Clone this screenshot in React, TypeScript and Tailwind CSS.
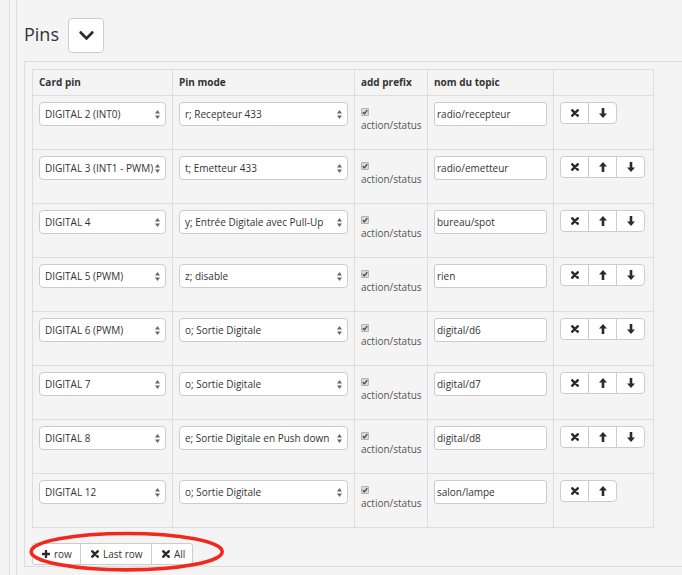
import React from "react";
import { FaChevronDown } from "react-icons/fa";

type Row = { pin: string; mode: string; topic: string; up: boolean; down: boolean };

const rows: Row[] = [
  { pin: "DIGITAL 2 (INT0)", mode: "r; Recepteur 433", topic: "radio/recepteur", up: false, down: true },
  { pin: "DIGITAL 3 (INT1 - PWM)", mode: "t; Emetteur 433", topic: "radio/emetteur", up: true, down: true },
  { pin: "DIGITAL 4", mode: "y; Entrée Digitale avec Pull-Up", topic: "bureau/spot", up: true, down: true },
  { pin: "DIGITAL 5 (PWM)", mode: "z; disable", topic: "rien", up: true, down: true },
  { pin: "DIGITAL 6 (PWM)", mode: "o; Sortie Digitale", topic: "digital/d6", up: true, down: true },
  { pin: "DIGITAL 7", mode: "o; Sortie Digitale", topic: "digital/d7", up: true, down: true },
  { pin: "DIGITAL 8", mode: "e; Sortie Digitale en Push down", topic: "digital/d8", up: true, down: true },
  { pin: "DIGITAL 12", mode: "o; Sortie Digitale", topic: "salon/lampe", up: true, down: false },
];

function SelectBox({ value }: { value: string }) {
  return (
    <div className="relative flex h-[24px] w-full items-center overflow-hidden whitespace-nowrap rounded-[4px] border border-[#ccc] bg-white pl-[5px] text-[10px] text-[#333]">
      {value}
      <svg className="absolute right-[5px] top-[7px]" width="5" height="9" viewBox="0 0 5 9">
        <path d="M0 3.5 L2.5 0 L5 3.5 Z" fill="#666" />
        <path d="M0 5.5 L5 5.5 L2.5 9 Z" fill="#666" />
      </svg>
    </div>
  );
}

function XIcon({ s = 8 }: { s?: number }) {
  return (
    <svg width={s} height={s} viewBox="0 0 8 8">
      <path d="M1.3 1.3 L6.7 6.7 M6.7 1.3 L1.3 6.7" stroke="#2b2b2b" strokeWidth="2.5" strokeLinecap="round" fill="none" />
    </svg>
  );
}

function PlusIcon() {
  return (
    <svg width="8" height="8" viewBox="0 0 8 8">
      <path d="M4 0.6 V7.4 M0.6 4 H7.4" stroke="#2b2b2b" strokeWidth="2.3" strokeLinecap="round" fill="none" />
    </svg>
  );
}

function ArrowUp() {
  return (
    <svg width="8" height="10" viewBox="0 0 8 10">
      <path d="M4 0 L8 4.6 L5.3 4.6 L5.3 10 L2.7 10 L2.7 4.6 L0 4.6 Z" fill="#2b2b2b" />
    </svg>
  );
}

function ArrowDown() {
  return (
    <svg width="8" height="10" viewBox="0 0 8 10">
      <path d="M4 10 L8 5.4 L5.3 5.4 L5.3 0 L2.7 0 L2.7 5.4 L0 5.4 Z" fill="#2b2b2b" />
    </svg>
  );
}

function Check() {
  return (
    <span className="flex h-[8px] w-[8px] items-center justify-center rounded-[1px] border border-[#b3b3b3] bg-[#d9d9d9]">
      <svg width="6" height="6" viewBox="0 0 6 6">
        <path d="M0.8 3.2 L2.4 4.8 L5.3 1.2" stroke="#444" strokeWidth="1.3" fill="none" />
      </svg>
    </span>
  );
}

function ActionButtons({ up, down }: { up: boolean; down: boolean }) {
  const items: React.ReactNode[] = [<XIcon key="x" />];
  if (up) items.push(<ArrowUp key="u" />);
  if (down) items.push(<ArrowDown key="d" />);
  return (
    <div className="flex">
      {items.map((icon, i) => (
        <div
          key={i}
          className={
            "flex h-[22px] w-[29px] items-center justify-center border border-[#ccc] bg-white " +
            (i > 0 ? "-ml-px " : "") +
            (i === 0 ? "rounded-l-[4px] " : "") +
            (i === items.length - 1 ? "rounded-r-[4px]" : "")
          }
        >
          {icon}
        </div>
      ))}
    </div>
  );
}

const cell = "border-r border-b border-[#ddd] px-[6px]";

export default function App() {
  return (
    <div className="relative h-[575px] w-[682px] overflow-hidden bg-[#f4f4f4] font-['Open_Sans',sans-serif] text-[#333]">
      <div className="h-full pl-[9px]">
        <div className="h-full border-l border-[#dedede] pl-[6px]">
          <div className="h-full border-l border-[#dedede] pl-[7px] pt-[18px]">
            <div className="flex items-center">
              <span className="-mt-[3px] text-[18px] leading-[24px] text-[#333]">Pins</span>
              <div className="ml-[9px] flex h-[35px] w-[36px] items-center justify-center rounded-[4px] border border-[#ccc] bg-white">
                <FaChevronDown size={17} color="#2b2b2b" />
              </div>
            </div>

            <div className="mt-[8px] w-[700px] border border-[#ddd] px-[7px] pt-[7px] pb-px">
              <div className="grid w-[622px] grid-cols-[140px_182px_73px_126px_100px] border-l border-t border-[#ddd]">
                <div className={cell + " flex h-[26px] items-center text-[10px] font-bold"}>Card pin</div>
                <div className={cell + " flex h-[26px] items-center text-[10px] font-bold"}>Pin mode</div>
                <div className={cell + " flex h-[26px] items-center text-[10px] font-bold"}>add prefix</div>
                <div className={cell + " flex h-[26px] items-center text-[10px] font-bold"}>nom du topic</div>
                <div className={cell + " h-[26px]"}></div>
                {rows.map((r, i) => (
                  <React.Fragment key={i}>
                    <div className={cell + " h-[54px] pt-[6px]"}>
                      <SelectBox value={r.pin} />
                    </div>
                    <div className={cell + " h-[54px] pt-[6px]"}>
                      <SelectBox value={r.mode} />
                    </div>
                    <div className={cell + " h-[54px] pt-[12px]"}>
                      <Check />
                      <div className="mt-[2px] text-[10px] leading-[14px] text-[#555]">action/status</div>
                    </div>
                    <div className={cell + " h-[54px] pt-[6px]"}>
                      <div className="flex h-[24px] w-full items-center rounded-[3px] border border-[#ccc] bg-white pl-[2px] text-[10px] text-[#333]">
                        {r.topic}
                      </div>
                    </div>
                    <div className={cell + " h-[54px] pt-[6px]"}>
                      <ActionButtons up={r.up} down={r.down} />
                    </div>
                  </React.Fragment>
                ))}
              </div>

              <div className="mt-[15px] flex text-[10px] text-[#333]">
                <div className="flex h-[22px] w-[49px] items-center gap-[4px] rounded-l-[3px] border border-[#ccc] bg-white pl-[9px]">
                  <PlusIcon />
                  <span>row</span>
                </div>
                <div className="-ml-px flex h-[22px] w-[72px] items-center gap-[4px] border border-[#ccc] bg-white pl-[10px]">
                  <XIcon />
                  <span>Last row</span>
                </div>
                <div className="-ml-px flex h-[22px] w-[42px] items-center gap-[4px] rounded-r-[3px] border border-[#ccc] bg-white pl-[10px]">
                  <XIcon />
                  <span>All</span>
                </div>
              </div>
            </div>
          </div>
        </div>
      </div>

      <svg className="pointer-events-none absolute left-0 top-0" width="682" height="575" viewBox="0 0 682 575">
        <ellipse cx="126.7" cy="551.7" rx="95.5" ry="18.2" fill="none" stroke="#f2281d" strokeWidth="3.6" />
      </svg>
    </div>
  );
}
